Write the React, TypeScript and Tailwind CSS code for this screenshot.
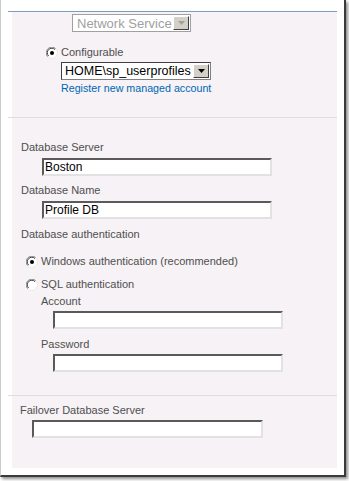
const font = { fontFamily: '"Liberation Sans", Arial, sans-serif' };

const Radio = ({ checked }: { checked?: boolean }) => (
  <svg width="12" height="12" viewBox="0 0 12 12" className="shrink-0">
    <circle cx="6" cy="6" r="5.5" fill="#fff" />
    <path d="M1.8 9.8 A5.3 5.3 0 0 1 9.8 1.8" fill="none" stroke="#8a8a8a" strokeWidth="1" />
    <path d="M2.6 9 A4.3 4.3 0 0 1 9 2.6" fill="none" stroke="#404040" strokeWidth="1" />
    <path d="M9.8 1.8 A5.3 5.3 0 0 1 1.8 9.8" fill="none" stroke="#e8e8e8" strokeWidth="1" />
    {checked && <circle cx="6" cy="6" r="2" fill="#000" />}
  </svg>
);

const Input = ({ value, className }: { value?: string; className?: string }) => (
  <div
    className={`h-[18px] w-[230px] bg-white border-2 border-t-[#5a5a5a] border-l-[#5a5a5a] border-r-[#e2e2e2] border-b-[#e2e2e2] text-[12px] leading-[14px] pl-[1px] text-black ${className ?? ""}`}
  >
    {value}
  </div>
);

const DropButton = ({ disabled }: { disabled?: boolean }) => (
  <div className="w-[16px] h-[14px] bg-[#d4d0c8] border border-t-white border-l-white border-r-[#404040] border-b-[#404040] flex items-center justify-center">
    <svg width="7" height="4" viewBox="0 0 7 4">
      <path d="M0 0 H7 L3.5 4 Z" fill={disabled ? "#a0a0a0" : "#000"} />
    </svg>
  </div>
);

export default function App() {
  return (
    <div className="w-[349px] h-[481px] bg-white" style={font}>
      <div className="w-[346px] h-[477px] bg-white border-l border-l-[#cacaca] border-r-2 border-b-2 border-r-[#3a3a3a] border-b-[#3a3a3a] shadow-[2px_2px_3px_rgba(0,0,0,0.45)] pl-[7px] pt-[11px] text-[11px] leading-[13px] text-[#4f4f4f]">
        <div className="w-[329px] flex flex-col">
          <div className="h-px bg-[#7f9cc0]" />

          {/* service account */}
          <div className="ml-[4px] bg-[#f6f2f5] h-[105px] pt-[2px]">
            <div className="ml-[60px] w-[119px] h-[18px] border border-[#a0a0a0] bg-white flex items-center justify-between pl-[4px] pr-[1px] text-[13px] text-[#a0a0a0]">
              <span>Network Service</span>
              <DropButton disabled />
            </div>
            <div className="ml-[34px] mt-[14px] flex items-center gap-[3px]">
              <Radio checked />
              <span>Configurable</span>
            </div>
            <div className="ml-[49px] mt-[3px] w-[150px] h-[18px] border border-t-[#404040] border-l-[#404040] border-r-[#808080] border-b-[#808080] bg-white flex items-center justify-between pl-[3px] pr-[1px] text-[12.5px] text-black">
              <span>HOME\sp_userprofiles</span>
              <DropButton />
            </div>
            <div className="ml-[49px] mt-[2px] text-[10.7px] text-[#0066b3]">Register new managed account</div>
          </div>

          <div className="h-px bg-[#dedede]" />

          {/* database */}
          <div className="ml-[4px] bg-[#f6f2f5] h-[277px] pl-[9px] pt-[23px]">
            <div>Database Server</div>
            <Input value="Boston" className="ml-[21px] mt-[4px]" />
            <div className="mt-[8px]">Database Name</div>
            <Input value="Profile DB" className="ml-[21px] mt-[4px]" />
            <div className="mt-[9px]">Database authentication</div>
            <div className="ml-[5px] mt-[14px] flex items-center gap-[3px]">
              <Radio checked />
              <span>Windows authentication (recommended)</span>
            </div>
            <div className="ml-[5px] mt-[10px] flex items-center gap-[3px]">
              <Radio />
              <span>SQL authentication</span>
            </div>
            <div className="ml-[20px] mt-[4px]">Account</div>
            <Input className="ml-[32px] mt-[3px]" />
            <div className="ml-[20px] mt-[9px]">Password</div>
            <Input className="ml-[32px] mt-[3px]" />
          </div>

          <div className="h-px bg-[#dedede]" />

          {/* failover */}
          <div className="ml-[4px] bg-[#f6f2f5] h-[72px] pl-[8px] pt-[8px]">
            <div>Failover Database Server</div>
            <Input className="ml-[12px] mt-[3px] w-[231px]" />
          </div>
        </div>
      </div>
    </div>
  );
}
